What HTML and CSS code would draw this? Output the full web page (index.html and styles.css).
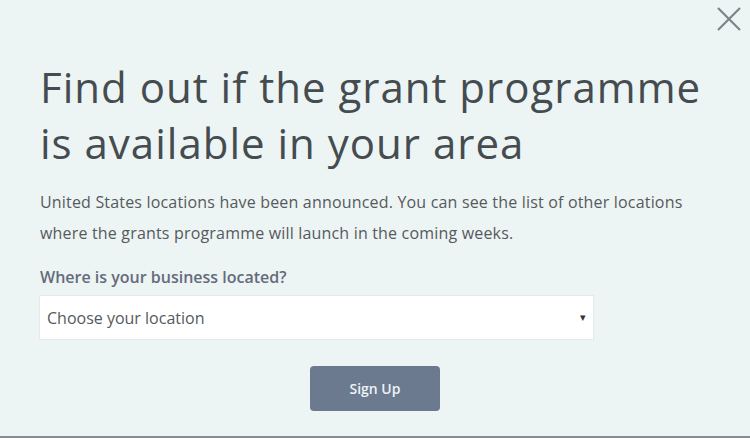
FILE: index.html
```html
<!DOCTYPE html>
<html lang="en">
<head>
  <meta charset="UTF-8">
  <meta name="viewport" content="width=device-width, initial-scale=1">
  <title>Grant programme</title>
  <link rel="stylesheet" href="styles.css">
</head>
<body>
  <div class="modal">
    <button class="close" aria-label="Close">
      <svg width="26" height="26" viewBox="0 0 26 26">
        <path d="M2 2 L24 24 M24 2 L2 24" stroke="#7d858b" stroke-width="2.2" fill="none"/>
      </svg>
    </button>

    <h1>Find out if the grant programme is available in your area</h1>

    <p class="intro">United States locations have been announced. You can see the list of other locations where the grants programme will launch in the coming weeks.</p>

    <label class="field-label" for="location">Where is your business located?</label>
    <div class="select-wrap">
      <select id="location">
        <option>Choose your location</option>
      </select>
      <span class="arrow">&#9662;</span>
    </div>

    <div class="actions">
      <button class="signup">Sign Up</button>
    </div>
  </div>
</body>
</html>
```

FILE: styles.css
```css
* { box-sizing: border-box; }
html, body { height: 100%; }
body {
  margin: 0;
  background: #edf4f4;
  font-family: "Open Sans", "Noto Sans", sans-serif;
  border-bottom: 2px solid #8a8d8f;
  overflow: hidden;
}
.modal {
  position: relative;
  padding: 59px 40px 0 40px;
}
.close {
  position: absolute;
  top: 6px;
  right: 8px;
  background: none;
  border: none;
  padding: 0;
  cursor: pointer;
}
h1 {
  margin: 0;
  font-size: 42px;
  line-height: 56px;
  font-weight: 500;
  color: #454c50;
  letter-spacing: 1px;
  width: 680px;
}
.intro {
  margin: 16px 0 0 0;
  font-size: 16px;
  line-height: 31px;
  color: #555a5d;
  letter-spacing: 0.18px;
  width: 660px;
}
.field-label {
  display: block;
  margin-top: 17px;
  font-size: 16px;
  font-weight: 600;
  color: #646b7b;
}
.select-wrap {
  position: relative;
  width: 555px;
  margin-top: 7px;
  margin-left: -1px;
}
select {
  appearance: none;
  width: 100%;
  height: 45px;
  padding: 0 7px;
  font-family: inherit;
  font-size: 16px;
  color: #555a5d;
  background: #fff;
  border: 1px solid #e4eaea;
  border-radius: 0;
}
.arrow {
  position: absolute;
  right: 8px;
  top: 14px;
  font-size: 11px;
  color: #333;
  pointer-events: none;
}
.actions {
  display: flex;
  justify-content: center;
  margin: 26px -40px 0 -40px;
}
.signup {
  width: 130px;
  height: 45px;
  border: none;
  border-radius: 4px;
  background: #6b7a8e;
  color: #eef2f7;
  font-family: inherit;
  font-size: 14px;
  font-weight: 600;
  cursor: pointer;
}
```
